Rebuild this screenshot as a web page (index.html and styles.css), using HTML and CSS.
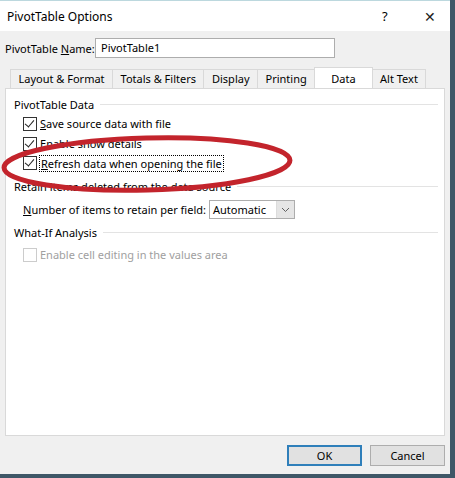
FILE: index.html
```html
<!DOCTYPE html>
<html lang="en">
<head>
  <meta charset="UTF-8">
  <title>PivotTable Options</title>
  <link rel="stylesheet" href="styles.css">
</head>
<body>
  <div class="dialog">
    <div class="titlebar">
      <span class="title">PivotTable Options</span>
      <span class="help">?</span>
      <span class="close">&#x2715;</span>
    </div>

    <div class="content">
      <div class="name-row">
        <label>PivotTable <u>N</u>ame:</label>
        <div class="textbox">PivotTable1</div>
      </div>

      <div class="tabs">
        <div class="tab">Layout &amp; Format</div>
        <div class="tab">Totals &amp; Filters</div>
        <div class="tab">Display</div>
        <div class="tab">Printing</div>
        <div class="tab active">Data</div>
        <div class="tab">Alt Text</div>
      </div>

      <div class="panel">
        <div class="group-title"><span>PivotTable Data</span></div>
        <div class="check"><span class="box on"></span><span><u>S</u>ave source data with file</span></div>
        <div class="check"><span class="box on"></span><span><u>E</u>nable show details</span></div>
        <div class="check"><span class="box on"></span><span class="focus"><u>R</u>efresh data when opening the file</span></div>

        <div class="group-title second"><span>Retain items deleted from the data source</span></div>
        <div class="field-row">
          <span><u>N</u>umber of items to retain per field:</span>
          <div class="select">
            <span class="value">Automatic</span>
            <span class="arrow">
              <svg width="9" height="6" viewBox="0 0 9 6"><path d="M1 1 L4.5 4.5 L8 1" fill="none" stroke="#606060" stroke-width="1"/></svg>
            </span>
          </div>
        </div>

        <div class="group-title third"><span>What-If Analysis</span></div>
        <div class="check disabled"><span class="box"></span><span>Enable cell editing in the values area</span></div>

        <svg class="mark" width="300" height="70" viewBox="0 0 300 70">
          <ellipse cx="147" cy="33" rx="143" ry="26" transform="rotate(-1.5 147 33)" fill="none" stroke="#c3242c" stroke-width="5"/>
        </svg>
      </div>

      <div class="buttons">
        <button class="default">OK</button>
        <button>Cancel</button>
      </div>
    </div>
  </div>
</body>
</html>
```

FILE: styles.css
```css
html {
  background: #3f5767;
}

body {
  margin: 0;
  font-family: 'Noto Sans', 'Open Sans', sans-serif;
  font-size: 11px;
  color: #000;
  white-space: nowrap;
}

.dialog {
  width: 450px;
  height: 474px;
  background: #f0f0f0;
  display: flex;
  flex-direction: column;
}

.titlebar {
  height: 31px;
  background: #fff;
  display: flex;
  align-items: center;
  padding: 0 0 0 7px;
  border-top: 1px solid #bcd8de;
  box-sizing: border-box;
}

.title {
  flex: 1;
  font-size: 12px;
}

.help {
  width: 20px;
  font-size: 13px;
  margin-right: 22px;
}

.close {
  width: 20px;
  font-size: 14px;
  color: #222;
  margin-right: 6px;
}

.content {
  flex: 1;
  padding: 0 5px 0 5px;
  display: flex;
  flex-direction: column;
}

.name-row {
  display: flex;
  align-items: center;
  margin-top: 7px;
  height: 20px;
}

.name-row label {
  width: 90px;
}

.textbox {
  width: 233px;
  height: 18px;
  background: #fff;
  border: 1px solid #adadad;
  padding-left: 5px;
  line-height: 18px;
}

.tabs {
  display: flex;
  align-items: flex-end;
  margin-top: 8px;
  padding-left: 5px;
  height: 22px;
}

.tab {
  height: 18px;
  line-height: 18px;
  padding: 0 7.5px;
  border: 1px solid #d9d9d9;
  border-bottom: none;
  border-right: none;
  background: #f0f0f0;
}

.tab:nth-child(6) {
  border-right: 1px solid #d9d9d9;
}

.tab.active {
  height: 21px;
  line-height: 21px;
  background: #fff;
  padding: 0 16px;
  border-right: 1px solid #d9d9d9;
  margin-bottom: -1px;
  position: relative;
}

.tab.active + .tab {
  border-left: none;
}

.panel {
  height: 348px;
  background: #fff;
  border: 1px solid #d9d9d9;
  box-sizing: border-box;
  padding: 6px 6px 0 8px;
  position: relative;
}

.group-title {
  display: flex;
  align-items: center;
  height: 19px;
}

.group-title::after {
  content: "";
  flex: 1;
  border-top: 1px solid #e3e3e3;
  margin-left: 6px;
}

.group-title.second {
  margin-top: 3px;
  height: 21px;
}

.group-title.third {
  height: 22px;
}

.check {
  display: flex;
  align-items: center;
  height: 19.7px;
  padding-left: 9px;
}

.box {
  width: 12px;
  height: 12px;
  border: 1px solid #333;
  margin-right: 3px;
  position: relative;
  background: #fff;
}

.box.on::after {
  content: "";
  position: absolute;
  left: 3px;
  top: 0px;
  width: 4px;
  height: 8px;
  border: solid #222;
  border-width: 0 1.5px 1.5px 0;
  transform: rotate(40deg);
}

.focus {
  outline: 1px dotted #000;
  padding: 0 1px;
  line-height: 15px;
}

.check.disabled {
  color: #a0a0a0;
  margin-top: 2px;
}

.check.disabled .box {
  border-color: #cccccc;
}

.field-row {
  display: flex;
  align-items: center;
  height: 23px;
  padding-left: 9px;
  margin-top: 1px;
}

.select {
  display: flex;
  margin-left: 3px;
  width: 84px;
  height: 17px;
  border: 1px solid #adadad;
  background: #fff;
}

.select .value {
  flex: 1;
  padding-left: 3px;
  line-height: 17px;
}

.select .arrow {
  width: 17px;
  background: #e5e5e5;
  border-left: 1px solid #dcdcdc;
  display: flex;
  align-items: center;
  justify-content: center;
}

.mark {
  position: absolute;
  left: -6px;
  top: 42px;
}

.buttons {
  display: flex;
  justify-content: flex-end;
  gap: 8px;
  margin-top: 9px;
}

.buttons button {
  width: 75px;
  height: 21px;
  font-family: inherit;
  font-size: 11px;
  background: #e1e1e1;
  border: 1px solid #adadad;
  padding: 0;
}

.buttons button.default {
  border: 2px solid #2f7fba;
}
```
